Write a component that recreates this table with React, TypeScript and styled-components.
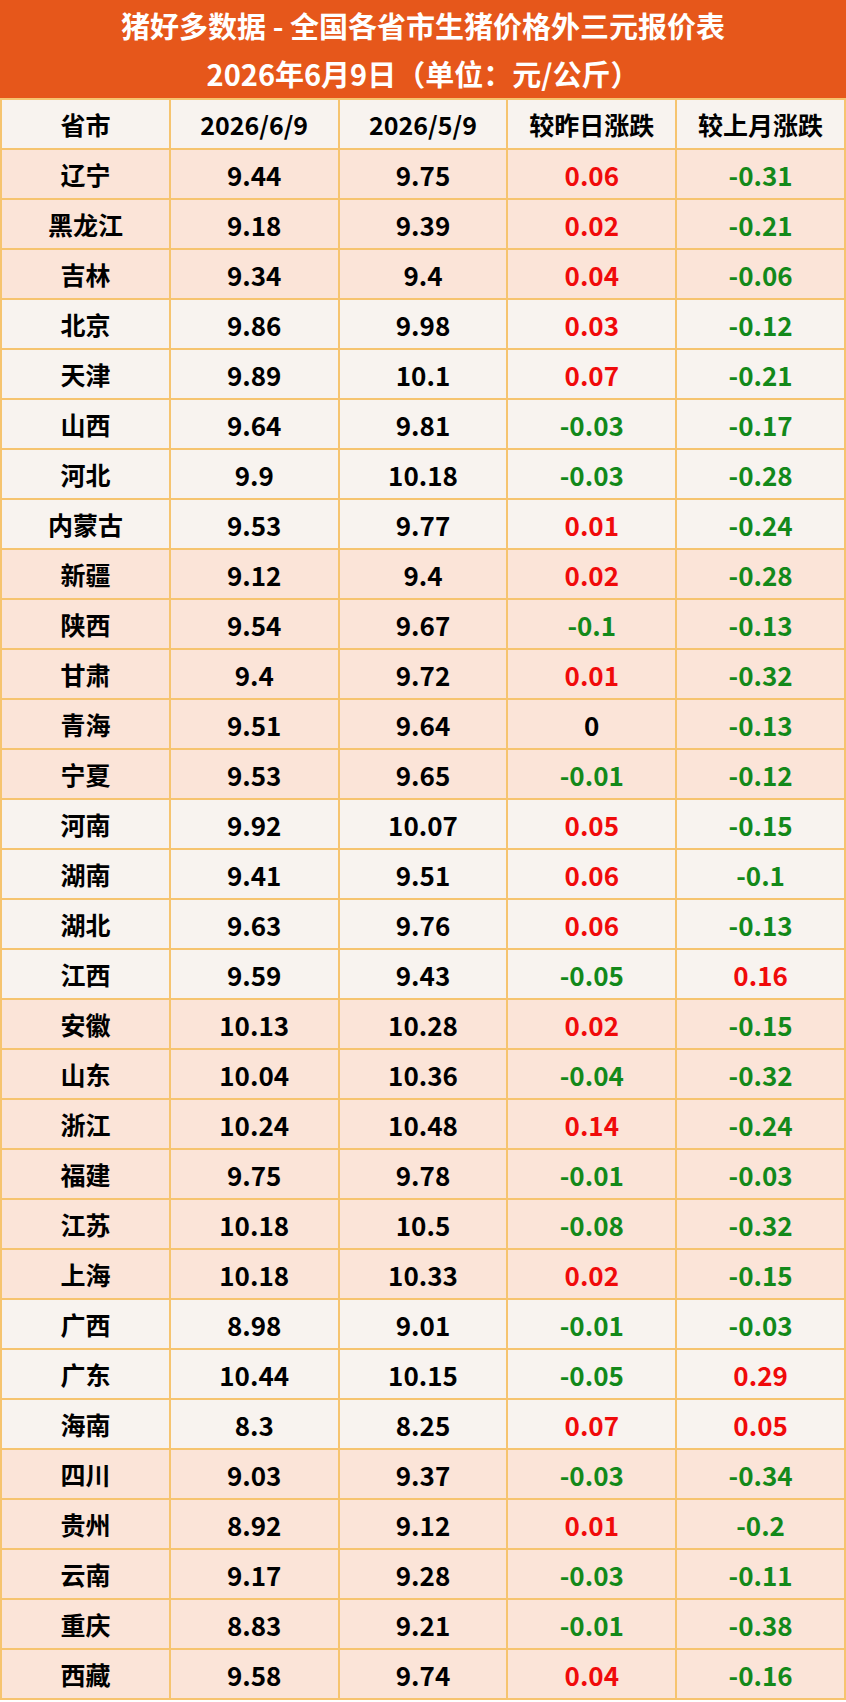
import styled, { createGlobalStyle } from "styled-components";

type Row = {
  name: string;
  today: string;
  lastMonth: string;
  dayChange: string;
  monthChange: string;
  shade: "peach" | "light";
};

// 分区：东北、华北、西北、华中、华东、华南、西南，底色交替
const groups: { shade: "peach" | "light"; rows: string[][] }[] = [
  {
    shade: "peach",
    rows: [
      ["辽宁", "9.44", "9.75", "0.06", "-0.31"],
      ["黑龙江", "9.18", "9.39", "0.02", "-0.21"],
      ["吉林", "9.34", "9.4", "0.04", "-0.06"],
    ],
  },
  {
    shade: "light",
    rows: [
      ["北京", "9.86", "9.98", "0.03", "-0.12"],
      ["天津", "9.89", "10.1", "0.07", "-0.21"],
      ["山西", "9.64", "9.81", "-0.03", "-0.17"],
      ["河北", "9.9", "10.18", "-0.03", "-0.28"],
      ["内蒙古", "9.53", "9.77", "0.01", "-0.24"],
    ],
  },
  {
    shade: "peach",
    rows: [
      ["新疆", "9.12", "9.4", "0.02", "-0.28"],
      ["陕西", "9.54", "9.67", "-0.1", "-0.13"],
      ["甘肃", "9.4", "9.72", "0.01", "-0.32"],
      ["青海", "9.51", "9.64", "0", "-0.13"],
      ["宁夏", "9.53", "9.65", "-0.01", "-0.12"],
    ],
  },
  {
    shade: "light",
    rows: [
      ["河南", "9.92", "10.07", "0.05", "-0.15"],
      ["湖南", "9.41", "9.51", "0.06", "-0.1"],
      ["湖北", "9.63", "9.76", "0.06", "-0.13"],
      ["江西", "9.59", "9.43", "-0.05", "0.16"],
    ],
  },
  {
    shade: "peach",
    rows: [
      ["安徽", "10.13", "10.28", "0.02", "-0.15"],
      ["山东", "10.04", "10.36", "-0.04", "-0.32"],
      ["浙江", "10.24", "10.48", "0.14", "-0.24"],
      ["福建", "9.75", "9.78", "-0.01", "-0.03"],
      ["江苏", "10.18", "10.5", "-0.08", "-0.32"],
      ["上海", "10.18", "10.33", "0.02", "-0.15"],
    ],
  },
  {
    shade: "light",
    rows: [
      ["广西", "8.98", "9.01", "-0.01", "-0.03"],
      ["广东", "10.44", "10.15", "-0.05", "0.29"],
      ["海南", "8.3", "8.25", "0.07", "0.05"],
    ],
  },
  {
    shade: "peach",
    rows: [
      ["四川", "9.03", "9.37", "-0.03", "-0.34"],
      ["贵州", "8.92", "9.12", "0.01", "-0.2"],
      ["云南", "9.17", "9.28", "-0.03", "-0.11"],
      ["重庆", "8.83", "9.21", "-0.01", "-0.38"],
      ["西藏", "9.58", "9.74", "0.04", "-0.16"],
    ],
  },
];

const rows: Row[] = groups.flatMap((g) =>
  g.rows.map(([name, today, lastMonth, dayChange, monthChange]) => ({
    name,
    today,
    lastMonth,
    dayChange,
    monthChange,
    shade: g.shade,
  }))
);

const GlobalStyle = createGlobalStyle`
  html, body {
    margin: 0;
    padding: 0;
    background: #ffffff;
  }
  body {
    font-family: "Noto Sans CJK SC", "Noto Sans", sans-serif;
  }
`;

const Sheet = styled.div`
  width: 846px;
`;

const Banner = styled.header`
  background-color: #e6571b;
  color: #ffffff;
  height: 98px;
  display: flex;
  flex-direction: column;
  align-items: center;
  justify-content: center;
  gap: 2px;
  font-weight: 700;
  font-size: 29px;
  line-height: 46px;
`;

const Table = styled.table`
  width: 846px;
  border-collapse: collapse;
  table-layout: fixed;
`;

const HeadCell = styled.th`
  height: 48px;
  padding: 0;
  border: 2px solid #f6c46f;
  background-color: #f8f3ef;
  color: #000000;
  font-size: 25px;
  font-weight: 700;
  text-align: center;
  vertical-align: middle;
`;

const BodyRow = styled.tr<{ $shade: "peach" | "light" }>`
  background-color: ${({ $shade }) => ($shade === "peach" ? "#fbe4d8" : "#f8f3ef")};
`;

const Cell = styled.td<{ $tone?: "up" | "down" | "flat"; $label?: boolean }>`
  height: 48px;
  padding: 0;
  border: 2px solid #f6c46f;
  text-align: center;
  vertical-align: middle;
  font-size: ${({ $label }) => ($label ? "25px" : "26px")};
  font-weight: 700;
  color: ${({ $tone }) =>
    $tone === "up" ? "#f00a0a" : $tone === "down" ? "#13891a" : "#000000"};
`;

const toneOf = (v: string): "up" | "down" | "flat" => {
  const n = parseFloat(v);
  if (n > 0) return "up";
  if (n < 0) return "down";
  return "flat";
};

export default function App() {
  return (
    <Sheet>
      <GlobalStyle />
      <Banner>
        <div>猪好多数据 - 全国各省市生猪价格外三元报价表</div>
        <div>2026年6月9日（单位：元/公斤）</div>
      </Banner>
      <Table>
        <thead>
          <tr>
            <HeadCell>省市</HeadCell>
            <HeadCell>2026/6/9</HeadCell>
            <HeadCell>2026/5/9</HeadCell>
            <HeadCell>较昨日涨跌</HeadCell>
            <HeadCell>较上月涨跌</HeadCell>
          </tr>
        </thead>
        <tbody>
          {rows.map((r) => (
            <BodyRow key={r.name} $shade={r.shade}>
              <Cell $label>{r.name}</Cell>
              <Cell>{r.today}</Cell>
              <Cell>{r.lastMonth}</Cell>
              <Cell $tone={toneOf(r.dayChange)}>{r.dayChange}</Cell>
              <Cell $tone={toneOf(r.monthChange)}>{r.monthChange}</Cell>
            </BodyRow>
          ))}
        </tbody>
      </Table>
    </Sheet>
  );
}
